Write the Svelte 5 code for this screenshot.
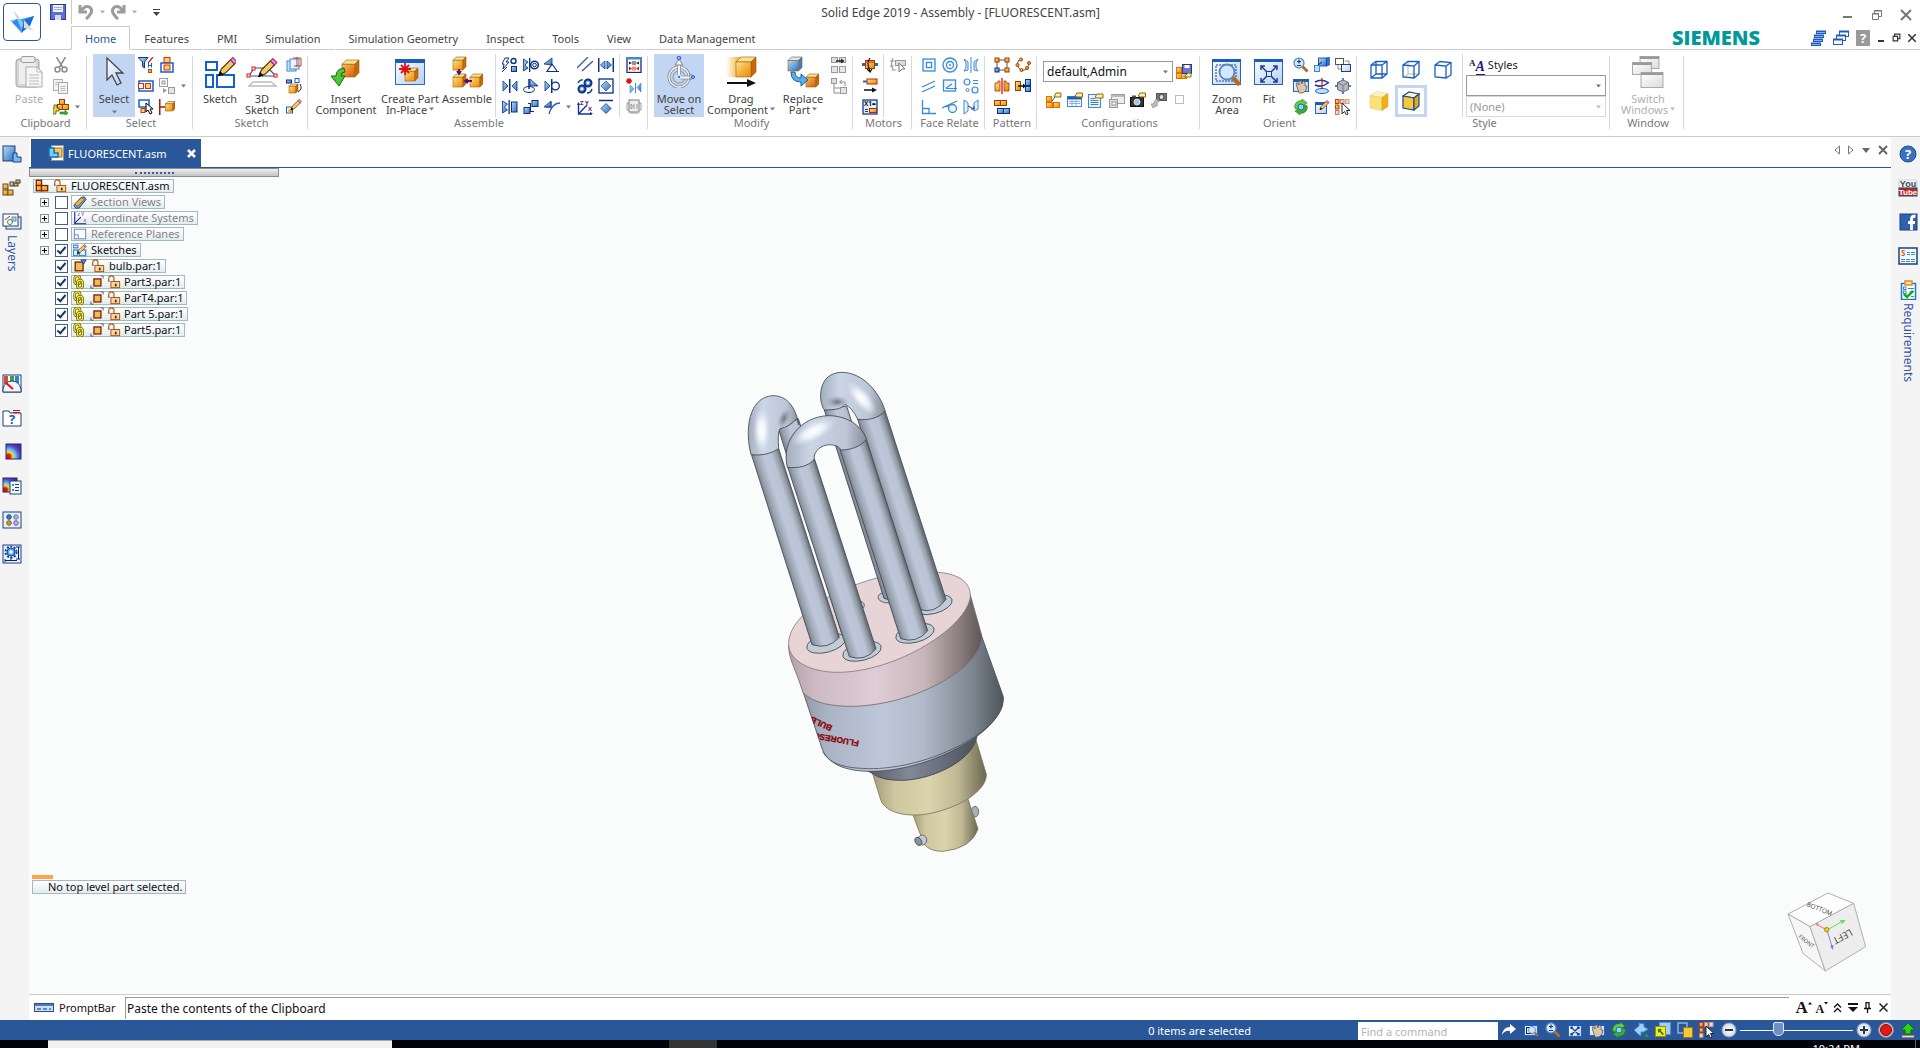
<script>
   const tabs = ["Home", "Features", "PMI", "Simulation", "Simulation Geometry", "Inspect", "Tools", "View", "Data Management"];
   let activeTab = $state("Home");
   let prompt = $state("Paste the contents of the Clipboard");

   // svg helpers
   const r = (x, y, w, h, fill = "none", stroke = "none", sw = 1) =>
      `<rect x="${x}" y="${y}" width="${w}" height="${h}" fill="${fill}" stroke="${stroke}" stroke-width="${sw}"/>`;
   const p = (d, stroke = "none", fill = "none", sw = 1) =>
      `<path d="${d}" fill="${fill}" stroke="${stroke}" stroke-width="${sw}"/>`;
   const c = (x, y, rad, fill = "none", stroke = "none", sw = 1) =>
      `<circle cx="${x}" cy="${y}" r="${rad}" fill="${fill}" stroke="${stroke}" stroke-width="${sw}"/>`;

   const NAVY = "#0a2f86", BLUE = "#1261d1", SKY = "#3a8ad6", RUST = "#a03a00", GRAY = "#9a9a9a", RED = "#e01010";
   const OR = "url(#gOrange)", BL = "url(#gBlue)", GL = "url(#gGlass)", GY = "url(#gGray)";

   const cube = (x, y, s, front = OR, top = "#fbe08a", side = "#c96a08") => {
      const d = s * 0.25;
      return p(`M${x} ${y + d}l${d} ${-d}h${s - d}l${-d} ${d}z`, "#8a5a10", top, 0.6)
         + p(`M${x + s - d} ${y + d}l${d} ${-d}v${s - d}l${-d} ${d}z`, "#8a5a10", side, 0.6)
         + r(x, y + d, s - d, s - d, front, "#a06010", 0.6);
   };
   const pencil = (x, y, s) => `<g transform="translate(${x} ${y}) scale(${s})">`
      + p("M0 16 2 10.500 10 2.500 13.500 6 5.500 14z", "#4a3000", "#f3c868") + p("M0 16 1 13 3 15z", "#000", "#222")
      + p("M10 2.500 12 .5 15.500 4 13.500 6z", "#a0307a", "#f090c8") + `</g>`;
   const lens = (x, y, rad) => p(`M${x + rad * 0.7} ${y + rad * 0.7}l${rad} ${rad}`, "#b86a20", "none", rad * 0.6)
      + c(x, y, rad, "#cfe8ff", "#5a88b8", rad * 0.25);
   const win = (x, y, w, h) => r(x, y, w, h, GL, "#2c62b8") + r(x - 0.5, y - 0.5, w + 1, 3, "#1c5cc0");
   const rotate = p("M2 9.500A6 6 0 0 1 9 1.800V0l5 4-5 3.500V5.500A4 4 0 0 0 5.500 10z", "#1c7a10", "#5cd040", 0.6)
      + p("M14 6.500A6 6 0 0 1 7 14.200V16l-5-4 5-3.500v2A4 4 0 0 0 10.500 6z", "#1c7a10", "#3cb02a", 0.6) + c(8, 8, 3, "#8fd0f8", "#2a68b0");
   const hand = win(0.5, 1.500, 15, 12) + p("M4 9 3 5l2 0 1 2 0-4 2 0 1 3 1-3 2 1 0 4 2 0-1 4-3 3-4 0z", "#6a5a48", "#d8c8b0", 0.8);
   const mate = (right) => p("M1 3v10l5-5z", NAVY, BL, 0.8) + r(7, 1, 1.500, 14, NAVY) + right;

   const icons = {
      cut: p("M3.500 0 9.500 10M12.500 0 6.500 10", "#8c8c8c", "none", 1.500) + c(4.500, 12.500, 2.500, "none", "#8c8c8c", 1.500) + c(11.500, 12.500, 2.500, "none", "#8c8c8c", 1.500),
      copy: r(0.5, 1.500, 9, 11, "#f2f2f2", "#b0b0b0") + r(5.500, 4.500, 9, 11, "#f4f4f4", "#a8a8a8") + p("M7.500 8.500h5M7.500 10.500h5M7.500 12.500h5M2.500 4.500h4M2.500 6.500h2", "#bbb"),
      pasteRel: r(6.500, 0.5, 5, 5, OR, RUST) + r(4.500, 5.500, 5, 5, OR, RUST) + r(9.500, 5.500, 6, 5, OR, RUST) + p("M1 6h3v3h2v3H3v3H0V9h1z", "#333", "#e8d820", 0.7) + p("M7 13h5v-2l3 3-3 3v-2H7z", "#0a700a", "#2eb82e", 0.5),
      filter: p("M0 .5h10L6.500 5v6l-2-1.500V5z", "#0b3d7c", BL) + p("M15 0 10 6", RED, "none", 1.200) + p("M10.500 8.500h3M10.500 6v4.500M13.500 6v4.500", BLUE) + r(10.500, 12.500, 3, 3, "#f5b042", "#c05000"),
      selTop: r(2, 6, 12, 9, "none", BLUE, 1.500) + r(5, 0.5, 6, 5, "#fbd06a", "#d03010") + r(5, 8, 6, 5, "#fbd06a", "#d03010"),
      selMid: r(1, 3, 14, 10, "none", BLUE, 1.500) + r(0.5, 5.500, 5, 5, "#fff", "#d03010") + r(7.500, 5.500, 5, 5, "#fbd06a", "#d03010"),
      selSub: r(0.5, 0.5, 8, 8, "none", GRAY) + r(3, 3, 3, 3, "#e8e8e8", GRAY) + r(9.500, 9.500, 6, 6, "#e4e4e4", GRAY) + p("M4 10v5l4-2.500z", "none", GRAY),
      selBox: r(1, 1, 10, 7, "none", BLUE, 1.500) + r(3, 9.500, 4, 4, "#fbd06a", "#d03010") + p("M8 4v9l2-2 2 4 2-1-2-4h3z", "#000", "#fff"),
      selEdge: r(0, 0, 1.500, 16, "#a01818") + p("M1 8h5", "#a01818", "none", 1.500) + cube(6.500, 2.500, 9.500),
      planes: r(1, 4, 9, 10, "#cfe6fb", SKY) + r(4, 2, 9, 10, "#e8f3fd", SKY) + p("M7 1h8v8H8M11 0v10", "#d04020"),
      reuse: r(0.5, 2, 5, 3, BL, NAVY) + r(9, 0.5, 4, 4, "#fff", BLUE) + cube(3, 6, 9) + p("M12 14q5-3 2-8", "#222"),
      redraw: r(0.5, 8, 6, 6, "#fff", BLUE) + r(2, 9.500, 4, 4, OR) + pencil(5, 0, 0.68),
      flash: p("M3 1h4L4 5h3L1 12l1-5H0z", NAVY, "#fff") + c(11.500, 4, 2.500, "#fff", NAVY, 1.400) + r(9.500, 9.500, 5, 5, BL, NAVY) + p("M0 15 5 10", NAVY),
      mate: mate(p("M15 3v10l-5-5z", NAVY, BL, 0.8)),
      axial: p("M0.500 2v12l4.500-3-3-3 3-3z", NAVY, BL, 0.8) + r(6, 1, 1.300, 14, NAVY) + c(11.500, 8, 3.800, "#fff", NAVY, 1.500) + c(11.500, 8, 1.800, "none", NAVY),
      angle: p("M0 7 8 1v7z", NAVY, BL, 0.8) + p("M8 7 3 14.500h12M8 7l5 7", NAVY, "none", 1.200),
      parallel: p("M0 11 11 0M5 14 16 4", "#3558a8", "none", 1.300),
      parallelAx: p("M0.700 1v14M15.300 1v14", NAVY, "none", 1.500) + p("M2.500 8 7 4v8zM13.500 8 9 4v8z", NAVY, BL, 0.8),
      insert: `<ellipse cx="6" cy="11.500" rx="5.500" ry="3" fill="none" stroke="${NAVY}"/>` + p("M6 1v10", NAVY, "none", 1.500) + p("M7 1 15 8H7z", NAVY, BL, 0.8),
      center: mate(c(11.500, 8, 3.800, "#fff", NAVY, 1.300)),
      gear: c(11, 5, 3.500, BL, NAVY, 2) + c(11, 5, 1.300, "#fff") + c(5, 11, 3.500, BL, NAVY, 2) + c(5, 11, 1.300, "#fff") + p("M1 5q2-4 5-3M15 11q-1 4-5 4", NAVY, "none", 1.300),
      diamondBox: r(1, 1, 14, 14, "#fff", NAVY, 1.300) + p("M8 3 13 8 8 13 3 8z", NAVY, BL, 0.6),
      planar: p("M0.500 2v12l5-3-3-3 3-3z", NAVY, BL, 0.8) + r(6.500, 1, 1.300, 14, NAVY) + r(9.500, 3, 5.500, 10, BL, NAVY),
      match: r(9, 1.500, 6, 6, BL, NAVY) + r(1, 8.500, 6, 6, BL, NAVY) + p("M5 4.500h2.500v8H11", NAVY, "none", 1.200),
      tangent: p("M0 8 7 2v6z", NAVY, BL, 0.8) + p("M5 15Q8 4 16 4M7 3v5H2", "#3558a8", "none", 1.300),
      axes: p("M1.500 4v11H15M2 14.500 10 6", "#123a9c", "none", 1.400) + `<text x="3" y="6" font-size="6" font-family="Open Sans" font-weight="bold" fill="#70107a">Z Y</text><text x="11" y="12" font-size="6" font-family="Open Sans" font-weight="bold" fill="#70107a">X</text>` + p("M0 6 1.500 3 3 6zM13 13l3 1.500-3 1.500z", "none", "#123a9c"),
      diamondTop: p("M1 1.500h14", NAVY, "none", 1.500) + p("M8 4.500 13 9.500 8 14.500 3 9.500z", NAVY, BL, 0.8),
      capture: r(1, 0.500, 14, 15, "#fff", NAVY, 1.300) + r(1, 0, 14, 2.500, SKY) + p("M3 4.500v3l3-1.500zM13 4.500v3l-3-1.500zM7 4v4M9 4v4", "none", "#222") + p("M7 4v4M9 4v4", "#222") + p("M3 9.500v4l3-2zM13 9.500v4l-3-2z", "none", RED) + p("M7 9.500v4M9 9.500v4", RED),
      newRel: p("M3 0v6M0 3h6M1 1l4 4M5 1 1 5", RED, "none", 1.300) + p("M4 7v8l4-4zM15 5v9l-4-4.500z", SKY, BL, 0.6) + p("M9.500 5v10", SKY),
      gray3: r(3, 1, 10, 12, "#eee", GRAY, 1.300) + p("M3 4H1v7h2M13 4h2v7h-2M5 5v5l2-2.500zM8 5v5M11 5v5", GRAY) + p("M4 14h8", GRAY),
      replA: r(0.5, 0.5, 6, 5, "#ddd", GRAY) + r(0.5, 9.500, 6, 6, "#e6e6e6", GRAY) + r(8.500, 9.500, 6, 6, "#e6e6e6", GRAY) + r(8.500, 0.5, 6, 5, "#e6e6e6", GRAY) + p("M5 4h7", "#222", "none", 1.500) + p("M10 1.500 13.500 4 10 6.500z", "none", "#222"),
      replB: r(0.5, 0.5, 5, 5, "#ddd", GRAY) + r(9.500, 9.500, 6, 6, "#e6e6e6", GRAY) + p("M3 6v9h6M3 10h6M14 8V4H9M11 2 8.500 4 11 6", "#8a8a8a"),
      motorA: r(3.500, 3.500, 9, 8, OR, RUST) + p("M0 7.500h3M13 7.500h3", "#3a62b0", "none", 3) + p("M8 1q-4 5 0 13M5 12l3 3 2-3", "#111", "none", 1.200) + p("M3 5h10", "#d02010"),
      motorB: r(5, 1, 10, 5, OR, "#b02808") + r(1, 2.500, 4, 2, "#3a62b0") + p("M2 12h9", "#111", "none", 1.500) + p("M10 9.500 15 12l-5 2.500z", "none", "#111"),
      motorC: r(1, 1, 14, 14, "#e8f0fc", "#123a9c", 1.300) + `<text x="2" y="7" font-size="6.500" font-family="Open Sans" font-weight="bold" fill="#111">X1=</text>` + r(7.500, 9.500, 7, 4, OR, "#b02808") + p("M3 10.500h3M3 12.500h3", "#123a9c"),
      motorG: r(5.500, 3.500, 10, 5, "#ddd", GRAY) + p("M3 1q-3 6 0 12M0 4h5M0 9h4M2 13h4", GRAY, "none", 1.200) + p("M9 6v9l3-3h3z", "#777", "#fff"),
      fConc: r(2, 2, 12, 12, "#f0f7ff", SKY, 1.300) + r(5.500, 5.500, 5, 5, "#fff", SKY, 1.300),
      fRing: c(8, 8, 7, "#f0f7ff", SKY, 1.300) + c(8, 8, 3.500, "#fff", SKY, 1.300) + c(8, 8, 1, SKY),
      fSym: p("M1 2 5 5v8L1 14l2-3V6zM15 2l-4 3v8l4 1-2-3V6z", SKY, "#eaf4ff") + p("M8 0v16", SKY),
      fPar: p("M1 9 14 3M1 14 14 8", SKY, "none", 1.200),
      fAlign: r(1.500, 2, 12, 11, "#f0f7ff", SKY, 1.300) + p("M4 10 10 6M4 10.500h11", SKY, "none", 1.200),
      fEq: c(4, 4, 3, "#eef6ff", SKY, 1.200) + c(12, 12, 3, "#eef6ff", SKY, 1.200) + c(4.500, 12, 1.500, "none", SKY) + p("M10 2.500h5M10 5.500h5", SKY),
      fPerp: p("M1.500 1v13.500H15M2 9.500h6v5", SKY, "none", 1.300),
      fTan: c(10.500, 9.500, 4, "#eef6ff", SKY, 1.300) + p("M0 9 15 2M4 8l3-1", SKY, "none", 1.200),
      fOff: p("M1 1 5 4v8L1 15zM15 1l-4 3v8l4-2z", SKY, "#eaf4ff") + p("M5 7l6 3M8 10h3V7", "#123a9c"),
      pRect: p("M3 3h10v10H3z", "#555") + r(1, 1, 4, 4, OR, RUST) + r(11, 1, 4, 4, OR, RUST) + r(1, 11, 4, 4, BL, NAVY) + r(11, 11, 4, 4, OR, RUST),
      pCurve: p("M4 3Q0 9 6 13q5 2 8-6", "#8a4a10") + c(6, 2.500, 1.500, OR, RUST) + c(2.500, 8, 1.500, OR, RUST) + c(6.500, 13, 1.500, OR, RUST) + c(12, 11, 1.500, OR, RUST) + c(14, 6, 1.500, OR, RUST),
      pMirror: p("M1 5h3V3h2v10H1zM15 5h-3V3h-2v10h5z", RUST, OR, 0.8) + p("M8 0v16", RED, "none", 1.300),
      pDup: r(0.5, 3.500, 5, 9, OR, RUST) + p("M3 8h6", "#111", "none", 1.500) + p("M8 5.500 11 8l-3 2.500z", "none", "#111") + r(10.500, 1.500, 5, 6, BL, NAVY) + r(10.500, 8.500, 5, 5, BL, NAVY),
      pClone: r(0.5, 1.500, 6, 5, OR, RUST) + r(6.500, 1.500, 6, 5, OR, RUST) + r(3.500, 9.500, 6, 5, BL, NAVY) + r(9.500, 9.500, 6, 5, BL, NAVY),
      cfgSave: r(0.5, 3.500, 5, 5, OR, "#e07000") + r(0.5, 9.500, 5, 5, OR, "#e07000") + r(5.500, 9.500, 5, 5, OR, "#e07000") + r(6.500, 0.500, 9, 9, "#6a7ac8", "#2a3484") + r(8.500, 1, 5, 3, "#fff") + p("M9 12l3-3h3v4h-6z", "#8a6a10", "#fdf0a0"),
      cfg1: r(0.5, 4.500, 5, 5, OR, "#e07000") + r(0.5, 10.500, 6, 5, OR, "#e07000") + r(7.500, 10.500, 6, 5, OR, "#e07000") + p("M8 5 10 1h5v4h-5z", "#8a6a10", "#fdf0a0") + p("M6 9 9 5", "#555"),
      cfg2: r(0.5, 4.500, 14, 10, "#fff", SKY) + r(0.5, 4.500, 14, 3, "#1c5cc0") + p("M2 9.500h11M2 11.500h11M5 8v6M9 8v6", "#8ab0e0") + p("M8 4 10 1h5.500v4H10z", "#8a6a10", "#fdf0a0"),
      cfg3: r(0.5, 2.500, 12, 13, "#e8f2fd", SKY) + p("M2.500 6.500h5M2.500 8.500h8M2.500 10.500h8M2.500 12.500h8", "#4a80c8") + p("M7 5 9 2h6v4H9z", "#8a6a10", "#fdf0a0"),
      cfg4: r(2.500, 2.500, 13, 9, "#eee", GRAY) + r(0.5, 7.500, 8, 8, "#ddd", GRAY) + r(2, 3, 13, 2, "#bbb") + r(3, 10, 4, 3, "#fff", GRAY),
      cfg5: r(0.5, 5.500, 13, 9, "#333", "#111") + c(7, 10, 3, "#9cc8f0", "#ddd") + r(2, 3.500, 4, 2, "#555") + p("M8 4 10 1h5.500v4H10z", "#8a6a10", "#fdf0a0"),
      cfg6: r(5.500, 1.500, 10, 7, "#777", "#555") + c(10.500, 5, 2.500, "#ddd", "#444") + p("M5 7 2 12H0l2 4 5-3H5l3-4z", GRAY, "#bbb", 0.8),
      cfg7: `<rect x="3.500" y="3.500" width="8" height="8" fill="none" stroke="#777" stroke-dasharray="1 1"/>`,
      zoom: lens(6, 6, 5) + p("M4 4.500h4M6 2.500v4M4 8.500h4", "#1a3a70", "none", 1.200),
      pan: hand,
      rotate,
      prevView: r(4.500, 1, 8, 8, BL, "#1c5cc0") + p("M12.500 1 15.500 0v8l-3 1z", NAVY, "#2a70c8", 0.5) + r(0.5, 8.500, 5, 6, "#bfe0fa", SKY) + p("M4 8 8 5", "#111"),
      spin: p("M1 4Q8 0 15 5M1 7q7 3 13-2", "#223a90", "none", 1.500) + p("M8 0v12", RED, "none", 1.200) + `<ellipse cx="8" cy="13" rx="6.500" ry="2.500" fill="#bfe0fa" stroke="#1c5cc0"/>`,
      newWin: win(1.500, 3.500, 11, 11) + pencil(6, 1, 0.6),
      views: r(0.5, 1.500, 8, 6, "#fff", "#555") + r(6.500, 7.500, 9, 7, GL, "#223a90") + p("M3 8v4h3M10 4h4v3", "#888"),
      cubeNav: p("M8 2 13.500 4.500v7L8 14 2.500 11.500v-7z", "#666", "#b4b8c0") + p("M8 7.500V14M8 7.500 2.500 4.500M8 7.500l5.500-3", "#777") + p("M8 0v2M8 14v2M0 8h2.500M13.500 8H16", SKY, "none", 2),
      picks: r(0.5, 0.5, 3.500, 4, OR, "#c04010") + r(5.500, 0.5, 3.500, 4, "#f6c8b0", "#d08060") + r(10.500, 0.500, 3.500, 4, "#f6d8c8", "#d0a090") + r(0.5, 6, 3.500, 4, OR, "#c04010") + r(0.5, 11.500, 3.500, 4, "#f6d8c8", "#c08060") + p("M7 4v11l2.500-2.500 2 3.500 1.500-1-1.500-3.500H15z", "#223", "#fff"),
      arrowR: p("M1 13Q2 5 9 5V2l6 5-6 5V9Q4 8 1 13z", "none", "#fff"),
      zoomWin: win(1.500, 1.500, 13, 12) + r(3.500, 5.500, 6, 6, "none", "#223") + lens(9, 8, 3.500),
      fitWin: win(1.500, 1.500, 13, 13) + p("M4 5l8 8M12 5l-8 8M4 7V5h2M10 5h2v2M4 11v2h2M10 13h2v-2", "#223a90", "none", 1.200),
      puzzle: p("M1 8 6 4V1l5 1v3l4 2-4 3-3 0v4L5 12z", "#3a8ad6", "#9fd0f8") + p("M11 15l2-4 3 4z", "none", "#22a022"),
      yellowWin: r(4.500, 0.5, 11, 12, "#9fd0f8", "#5a90d0") + r(0.5, 4.500, 10, 10, "#f4e820", "#a09000") + p("M3 7h4L5.500 8.500 9 12l-1.500 1L4.500 9.500 3 11z", "none", "#108010"),
      stack: r(1, 1, 9, 10, "#2a579a", "#9fc8f0", 1.200) + r(6.500, 5.500, 9, 10, "#f8c83a", "#a07808"),
      minus: c(8, 8, 7, "url(#gKnob)", "#8aa0c0") + p("M4 8h8", "#333", "none", 2),
      plus: c(8, 8, 7, "url(#gKnob)", "#8aa0c0") + p("M4 8h8M8 4v8", "#333", "none", 2),
      stop: c(8, 8, 7.500, "#c8c8c8", "#888") + c(8, 8, 5.500, "#e01818", "#900"),
      up: p("M8 1 15 8h-4v4H5V8H1z", "#0a700a", "#2ed01a") + r(2, 13.500, 12, 2, "#f0d8c8", "#b07050", 0.5),
      undo: p("M2 1v7h7M3 7Q7 1 11.500 3Q17 7 8 15", "#9c9c9c", "none", 3),
      redo: p("M14 1v7H7M13 7Q9 1 4.500 3Q-1 7 8 15", "#9c9c9c", "none", 3),
      save: r(0.5, 0.5, 15, 15, "#5b72cc", "#2a3a96") + r(3, 1, 10, 7, "#eef2fa") + r(5, 11, 6, 5, "#d8dcec") + p("M4 3.500h8M4 5.500h8", "#a8b0c8"),
      cascadeA: r(6.500, 1.500, 9, 2, "#fff", "#1c5cc0") + r(4.500, 5.500, 9, 2, "#fff", "#1c5cc0") + r(3.500, 9.500, 9, 2, "#fff", "#1c5cc0") + r(1.500, 13.500, 9, 2, "#fff", "#1c5cc0") + p("M6 1.500h10M4 5.500h10M3 9.500h10M1 13.500h10", "#1c5cc0", "none", 2),
      cascadeB: r(6.500, 1.500, 9, 5, "#fff", "#1c5cc0") + r(3.500, 5.500, 9, 5, "#fff", "#1c5cc0") + r(0.500, 9.500, 9, 5, "#fff", "#1c5cc0") + p("M6 1.500h10M3 5.500h10M0 9.500h10", "#1c5cc0", "none", 2),
      doc: r(3.500, 0.500, 12, 15, "#fff", "#8a94a0") + r(6, 3, 8, 9, "#f8c84a", "#a07818") + p("M1 3h5v5h4v4H1z", "#1a6fc0", "#7ad0f8", 1.500),
      asm: r(1.500, 1.500, 6, 6, OR, "#7a2000", 1.500) + r(1.500, 7.500, 6, 6, OR, "#7a2000", 1.500) + r(7.500, 7.500, 7, 6, OR, "#7a2000", 1.500),
      lock: r(4.500, 7.500, 10, 7, "#f8d890", "#a04010") + p("M2 7V4q0-3 3-3t3 3v3M1 7h2", "#a05818", "none", 1.300) + r(9, 10, 2, 3, "#333"),
      section: p("M1 12 9 3l4-1 2 3-8 10-4 0z", "#1c3c78", "#6aa0e0") + p("M2 10 10 3l3 2-8 8z", "#8a5010", "#f0b848"),
      coords: p("M2 1v13.500h13M2 14 9 7", "#102080", "none", 1.200) + `<text x="5" y="6" font-size="6" font-family="Open Sans" fill="#70107a">z Y</text><text x="12" y="12" font-size="6" font-family="Open Sans" fill="#70107a">x</text>`,
      plane: r(1.500, 2.500, 13, 11, "#f8fbff", "#5a78b8") + p("M2 9h4v4", "#5a78b8"),
      sketches: r(0.500, 2.500, 5, 3, "none", SKY, 1.500) + r(0.500, 8, 5, 6.500, "none", SKY, 1.500) + r(7.500, 8, 7, 6.500, "none", SKY, 1.500) + pencil(5, 1, 0.68),
      part: r(2.500, 3.500, 9, 10, "#f4bc50", "#7a2000", 1.500) + p("M9 1h6l-3 5z", NAVY, "#6a90e0"),
      partB: r(4.500, 4.500, 8, 8, "#f4bc50", "#7a2000", 1.500) + p("M12 1h3v3M1 12v3h3", "#555"),
      link: `<rect x="2" y="1" width="6" height="9" rx="3" fill="none" stroke="#5a5000" stroke-width="3"/><rect x="2" y="1" width="6" height="9" rx="3" fill="none" stroke="#f0e030" stroke-width="1.500"/><rect x="5" y="6" width="6" height="9" rx="3" fill="none" stroke="#5a5000" stroke-width="3"/><rect x="5" y="6" width="6" height="9" rx="3" fill="none" stroke="#f0e030" stroke-width="1.500"/>`,
      // sidebar, 20 x 20
      sPath: r(1, 2, 12, 15, BL, "#1c4078") + p("M11 9h4v4h4v5h-8z", "#1c4078", "#7ab8f0"),
      sLib: r(1, 6, 5, 5, OR, "#6a4a20") + r(1, 12, 5, 5, OR, "#6a4a20") + r(6, 12, 5, 5, OR, "#6a4a20") + r(8, 4, 4, 4, OR, "#345") + r(12, 5, 4, 3, OR, "#345") + r(14, 2, 4, 3, OR, "#345"),
      sLay: r(4, 5, 15, 12, "#e0eaf6", "#1c4078") + r(1, 2, 15, 12, "#fff", "#1c4078") + p("M3 8 8 4", RED) + c(8, 10, 2.500, "none", "#28a028") + r(10, 5, 4, 4, "#bcd", "#68a"),
      sSens: r(1, 1, 18, 17, "#fff", "#1c4078") + r(2, 2, 4, 8, "#d05030") + r(8, 2, 4, 8, "#38a050") + r(13, 2, 4, 8, "#3a80d0") + p("M1 15Q3 7 10 7t9 8v3H1z", "#1c4078", "#f2f6fa") + p("M11 15 4 9", RED, "none", 2),
      sHelp: p("M1 3h6l1 2h11v13H1z", "#1c4078", "#fff") + p("M11 2.500h7M11 4.500h7", RED) + `<text x="7" y="16" font-size="13" font-family="Open Sans" font-weight="bold" fill="#1c5cb0">?</text>`,
      sSim: `<rect x="4" y="2" width="15" height="15" fill="url(#gHeat)" stroke="#1c3068"/>`,
      sSimB: `<rect x="1" y="2" width="14" height="14" fill="url(#gHeat)" stroke="#1c3068"/>` + r(8, 5, 11, 13, "#f4f8ff", "#1c4078") + p("M13 8.500h4M13 11.500h4M13 14.500h4", "#1c4078") + r(10, 8, 2, 2, SKY) + r(10, 13, 2, 2, SKY),
      sDots: r(1, 2, 18, 16, "#e8f0f8", "#1c4078") + c(7, 7, 2.300, "#3a78c0", "#24508a") + c(14, 7, 2.300, "#a0b8c8", "#68808e") + c(7, 13, 2.300, "#d89820", "#8a5c08") + c(14, 13, 2.300, "#c0b0f0", "#6a50c0"),
      sGear: r(1, 1, 18, 18, "#e8f4ff", "#1c3c9c") + `<circle cx="9" cy="8" r="5.500" fill="none" stroke="#12409a" stroke-width="2" stroke-dasharray="2 1.500"/>` + c(9, 8, 4, "#4ab0f0", "#12409a") + c(9, 8, 1.800, "#fff") + p("M16.500 3v12M14 3h4M14 15h4M3 16.500h12M3 15v3M9 13v4", "#102060"),
      sQ: c(10, 10, 8, "#3a70c0", "#1c4890") + `<text x="10" y="15" text-anchor="middle" font-size="13" font-family="Open Sans" font-weight="bold" fill="#fff">?</text>`,
      sTube: r(1, 2, 18, 8, "#f2f6fa", "#c8d4e4") + r(1, 10, 18, 8, "#c82818", "#1c4078") + `<text x="10" y="9" text-anchor="middle" font-size="9" font-family="Liberation Sans" font-weight="bold" fill="#444">You</text><text x="10" y="17" text-anchor="middle" font-size="8" font-family="Liberation Sans" font-weight="bold" fill="#fff">Tube</text>`,
      sFb: r(2, 2, 17, 16, "#2f62ae", "#1c4078") + p("M13.500 18v-7M10 10.500h7M13.500 12V7q0-3 4-3", "#fff", "none", 2.800),
      sCard: r(1, 2, 18, 16, "#f6fbff", "#1c4078", 1.500) + `<text x="3" y="10" font-size="8" font-family="Open Sans" font-weight="bold" fill="#d06010">S</text>` + p("M9 6.500h3M13 6.500h4M9 8.500h3M13 8.500h4M3 13.500h4M8 13.500h4M13 13.500h4M3 15.500h4M8 15.500h4M13 15.500h4", SKY),
      sReq: r(3.500, 3.500, 14, 16, "#fff", "#1c78c8", 1.500) + r(7, 1, 7, 4, "#f6e0b8", "#d89018", 1.500) + r(5.500, 7, 2.500, 2.500, "none", SKY) + r(5.500, 11, 2.500, 2.500, "none", SKY) + p("M10 8.500h6M12 11.500h4M13 16.500h3", SKY) + p("M6 14l3 3 6-6", "#10b010", "none", 2.500),
      // large, 32 x 32
      paste: `<rect x="3" y="3" width="23" height="28" rx="3" fill="#d6d6d6" stroke="#a0a0a0"/>` + r(6, 6, 17, 22, "#ededed") + `<rect x="8" y="0.500" width="14" height="6" rx="2" fill="#eee" stroke="#9c9c9c"/>` + p("M13 11h11l5 5v15H13z", "#aaa", "#f6f6f6") + p("M24 11v5h5M16 19h10M16 22h10M16 25h10M16 28h10", "#bbb"),
      select: p("M9 2v22l5-5 5 10 4-2-5-10h7z", "#444", GL, 1.300),
      sketch: r(2, 6, 11, 8, "none", BLUE, 2) + r(2, 19, 7, 12, "none", BLUE, 2) + r(13, 19, 17, 12, "none", BLUE, 2) + pencil(15, 1, 1.150),
      sketch3d: p("M3 20 8 12h14l8 8z", "#3848a8", "none", 1.200) + p("M3 30l4-4h18l5 4z", "#bbb", "none", 1.300) + r(1, 18, 3, 3, "#fff", RED) + r(6, 11, 3, 3, "#fff", RED) + r(28, 18, 3, 3, "#fff", RED) + pencil(13, 2, 1.150),
      insertC: cube(12, 4, 17, "url(#gOrange2)") + p("M14 12Q6 13 6 20H1l8 10 6-10h-4q0-4 4-4z", "#156a10", "#4cc83a"),
      create: r(1.500, 3.500, 29, 25, GL, "#2c68c8") + r(1, 3, 30, 4, "#1c5cc0") + cube(11, 12, 13) + p("M11 7v12M5 13h12M7 9l8 8M15 9l-8 8", RED, "none", 1.800),
      assemble: cube(2, 1, 13) + cube(2, 18, 13) + cube(19, 18, 13) + p("M8 13v5M6 15l2 3 2-3M21 25h-6M17 23l-3 2 3 2", "#5a0a70", "none", 1.800),
      move: c(16, 21, 10, "none", "#8a9098", 3) + c(16, 21, 10, "none", "#eef2f6", 1.300) + c(16, 21, 6, "none", "#a0a6ae", 1.300) + r(14.500, 6, 3, 15, "#f2f4f6", "#888", 0.7) + r(16, 20, 13, 3, "#f2f4f6", "#888", 0.7) + p("M12 9 16 3l4 6zM27 18l4 3-4 3z", "#888", "#f2f4f6") + c(16, 2, 1.800, "#9ab8ff", "#2858e0") + c(16, 21, 2, "#4878f0", "#fff") + c(30, 21, 1.500, "#9ab8ff", "#2858e0"),
      drag: `<rect x="1" y="1" width="15" height="20" fill="url(#gTrail)"/>` + cube(11, 1, 20) + p("M2 27h22", "#111", "none", 2) + p("M22 23l9 4-9 4z", "none", "#111"),
      replace: cube(1, 1, 14, BL, "#cfe8fc", "#3a80c8") + cube(19, 18, 13, "url(#gOrange2)") + p("M4 16H8Q8 22 14 22V18l7 6-7 6V26Q4 26 4 16z", "#1c5c98", "#5ab0e8"),
      zoomArea: win(1.500, 3.500, 28, 25) + `<rect x="5" y="9" width="20" height="16" fill="none" stroke="#223a90" stroke-dasharray="2 1"/>` + lens(16, 16, 7.500),
      fit: win(1.500, 3.500, 28, 25) + p("M8 10l6 6M24 10l-6 6M8 26l6-6M24 26l-6-6M8 14v-4h4M20 10h4v4M8 22v4h4M20 26h4v-4", "#1c3c9c", "none", 1.500) + r(13.500, 15.500, 5, 5, "none", "#1c3c9c"),
      windows: [[8, 0.500, 19, 12], [0.500, 6.500, 19, 12], [9, 16.500, 22, 15]].map(([x, y, w, h]) => r(x, y, w, h, GY, "#aaa") + r(x, y, w, 2.500, "#999")).join(""),
      // shaded cubes, 20 x 20
      wire: p("M2 5l5-3.500h11v12.500L13 18H2zM2 5h11v13M13 5l5-3.500M7 1.500V14h11M7 14 2 18", "#1a5fc0", "none", 1.300),
      wireGray: p("M7 1.500V14h11M7 14 2 18", "#b8b8b8") + p("M2 5l5-3.500h11v12.500L13 18 2 17zM2 5l11 1v12M13 6l5-4.500", "#1a5fc0", "none", 1.300),
      wireHid: p("M2 5l5-3.500 11 1v12.500L13 18 2 17zM2 5l11 1v12M13 6l5-3.500", "#1a5fc0", "none", 1.300),
      shade: p("M1 4.500l7-4 11 2-6 4z", "#e8c85a", "#fdf3c8", 0.5) + p("M1 4.500l12 2v13L1 17z", "#e8c85a", "#fae27a", 0.5) + p("M13 6.500l6-4v13l-6 4z", "#d89a10", "#eeb020", 0.5),
      shadeEdge: p("M2 5l6-4 10 2-5 4z", "#1a4f9a", "#fdf3c8", 1.200) + p("M2 5l11 2v12L2 17z", "#1a4f9a", "#f6c83a", 1.200) + p("M13 7l5-4v12l-5 4z", "#1a4f9a", "#e8a818", 1.200)
   };

   const groups = [
      { name: "Clipboard", parts: [
         { big: "paste", lines: ["Paste"], size: "sm", off: true },
         { cols: [["cut", "copy", "pasteRel"]] }, { arrow: 3 }
      ] },
      { name: "Select", parts: [
         { big: "select", lines: ["Select"], size: "sm", on: true, drop: true },
         { cols: [["filter", "selMid", "selBox"], ["selTop", "selSub", "selEdge"]] }, { arrow: 2 }
      ] },
      { name: "Sketch", parts: [
         { big: "sketch", lines: ["Sketch"], size: "sm" },
         { big: "sketch3d", lines: ["3D", "Sketch"], size: "sm" },
         { cols: [["planes", "reuse", "redraw"]] }
      ] },
      { name: "Assemble", parts: [
         { big: "insertC", lines: ["Insert", "Component"], size: "lg" },
         { big: "create", lines: ["Create Part", "In-Place"], size: "lg", drop: true },
         { big: "assemble", lines: ["Assemble"], size: "md" },
         { sep: true },
         { cols: [["flash", "mate", "planar"], ["axial", "insert", "match"], ["angle", "center", "tangent"]] }, { arrow: 3 },
         { cols: [["parallel", "gear", "axes"], ["parallelAx", "diamondBox", "diamondTop"]] },
         { sep: true },
         { cols: [["capture", "newRel", "gray3"]] }
      ] },
      { name: "Modify", parts: [
         { big: "move", lines: ["Move on", "Select"], size: "md", on: true },
         { big: "drag", lines: ["Drag", "Component"], size: "xl", drop: true },
         { big: "replace", lines: ["Replace", "Part"], size: "md", drop: true },
         { cols: [["replA", "replB"]] }
      ] },
      { name: "Motors", parts: [
         { cols: [["motorA", "motorB", "motorC"]] }, { sep: true }, { cols: [["motorG"]] }
      ] },
      { name: "Face Relate", parts: [
         { cols: [["fConc", "fPar", "fPerp"], ["fRing", "fAlign", "fTan"], ["fSym", "fEq", "fOff"]] }
      ] },
      { name: "Pattern", parts: [
         { cols: [["pRect", "pMirror", "pClone"], ["pCurve", "pDup"]] }
      ] },
      { name: "Configurations", parts: [{ config: true }] },
      { name: "Orient", parts: [
         { big: "zoomArea", lines: ["Zoom", "Area"], size: "sm" },
         { big: "fit", lines: ["Fit"], size: "sm" },
         { cols: [["zoom", "pan", "rotate"], ["prevView", "spin", "newWin"], ["views", "cubeNav", "picks"]] }
      ] },
      { name: "Style", parts: [{ styles: true }] },
      { name: "Window", parts: [
         { big: "windows", lines: ["Switch", "Windows"], size: "lg", off: true, drop: true }
      ] }
   ];

   let tree = $state([
      { label: "Section Views", icons: ["section"], open: true, dim: true, on: false },
      { label: "Coordinate Systems", icons: ["coords"], open: true, dim: true, on: false },
      { label: "Reference Planes", icons: ["plane"], open: true, dim: true, on: false },
      { label: "Sketches", icons: ["sketches"], open: true, on: true },
      { label: "bulb.par:1", icons: ["part", "lock"], on: true },
      { label: "Part3.par:1", icons: ["link", "partB", "lock"], on: true },
      { label: "ParT4.par:1", icons: ["link", "partB", "lock"], on: true },
      { label: "Part 5.par:1", icons: ["link", "partB", "lock"], on: true },
      { label: "Part5.par:1", icons: ["link", "partB", "lock"], on: true }
   ]);

   const statusIcons = ["arrowR", "zoomWin", "zoom", "fitWin", "pan", "rotate", "puzzle", "yellowWin", "stack", "picks", "minus"];

   // lamp tubes: top left x/y, top right x/y, bottom left x/y, bottom right x/y
   const backTubes = [
      [145, 235, 205, 206, 335, 850, 392, 780],
      [283, 180, 350, 168, 462, 745, 530, 735],
      [383, 208, 465, 182, 566, 778, 648, 748]
   ];
   const frontTubes = [
      [65, 316, 146, 296, 246, 884, 328, 862],
      [173, 351, 254, 328, 358, 920, 438, 896],
      [330, 299, 409, 268, 512, 866, 593, 842]
   ];
   const feet = [[608, 764], [288, 880], [396, 904], [555, 850]];
   const body = (t) => `M${t[0]} ${t[1]}L${t[4]} ${t[5]}Q${(t[4] + t[6]) / 2 + 8} ${Math.max(t[5], t[7]) + 16} ${t[6]} ${t[7]}L${t[2]} ${t[3]}Z`;
</script>

{#snippet icon(name, size = 16, box = size)}
   <svg width={size} height={size} viewBox="0 0 {box} {box}" aria-hidden="true">{@html icons[name]}</svg>
{/snippet}

{#snippet caret()}
   <svg class="caret" width="7" height="4" viewBox="0 0 7 4" aria-hidden="true"><path d="M0 0h7L3.500 4z" fill="currentColor" /></svg>
{/snippet}

{#snippet tube(t, id)}
   <linearGradient {id} gradientUnits="userSpaceOnUse" x1={t[0]} y1={t[1]} x2={t[0] + 78} y2={t[1] - 25}>
      <stop offset="0" stop-color="#7e8592" /><stop offset="0.15" stop-color="#9ca5b2" />
      <stop offset="0.4" stop-color="#bec7da" /><stop offset="0.7" stop-color="#bac3d4" />
      <stop offset="0.9" stop-color="#929aa6" /><stop offset="1" stop-color="#6a717a" />
   </linearGradient>
   <path d={body(t)} fill="url(#{id})" stroke="#40454c" stroke-width="2.500" />
{/snippet}

<svg class="defs" width="0" height="0" aria-hidden="true">
   <defs>
      <linearGradient id="gOrange" x2="1" y2="1"><stop offset="0" stop-color="#fde49a" /><stop offset="0.5" stop-color="#f6b23a" /><stop offset="1" stop-color="#e88a08" /></linearGradient>
      <linearGradient id="gOrange2" x2="1" y2="1"><stop offset="0" stop-color="#fdc060" /><stop offset="1" stop-color="#d05a00" /></linearGradient>
      <linearGradient id="gBlue" x2="1" y2="1"><stop offset="0" stop-color="#b8dcf8" /><stop offset="1" stop-color="#2a70c0" /></linearGradient>
      <linearGradient id="gGlass" x2="1" y2="1"><stop offset="0" stop-color="#fff" /><stop offset="1" stop-color="#b4d0f4" /></linearGradient>
      <linearGradient id="gGray" x2="1" y2="1"><stop offset="0" stop-color="#fff" /><stop offset="1" stop-color="#dcdcdc" /></linearGradient>
      <linearGradient id="gTrail"><stop offset="0" stop-color="#f8b830" stop-opacity="0" /><stop offset="1" stop-color="#f0a020" /></linearGradient>
      <radialGradient id="gKnob"><stop offset="0" stop-color="#fff" /><stop offset="1" stop-color="#d0dcec" /></radialGradient>
      <radialGradient id="gHeat" cx="0.15" cy="0.85" r="0.95"><stop offset="0.15" stop-color="#e01010" /><stop offset="0.32" stop-color="#f8d820" /><stop offset="0.5" stop-color="#70c8f0" /><stop offset="0.75" stop-color="#5058d0" /><stop offset="1" stop-color="#6020a0" /></radialGradient>
   </defs>
</svg>

<div class="app">
   <header>
      <button class="logo" aria-label="Application menu">
         <svg width="36" height="36" viewBox="0 0 36 36" aria-hidden="true">
            <path d="M9 6 16 14 14 17z" fill="#cfd6dc" />
            <path d="M13 16 30 12 24 23z" fill="#3aa0f0" />
            <path d="M6 16 16 15 22 22 17 29z" fill="#8cc8f8" />
            <path d="M17 29 20 16 30 12 26 22z" fill="#1a6cd8" />
            <path d="M13 15 19 29 8 18z" fill="#2a8cec" />
            <path d="M20 16 26 23 30 27 20 24z" fill="#d4dbe2" />
         </svg>
      </button>
      <div class="head-main">
         <div class="title-row">
            <div class="qat">
               <button aria-label="Save">{@render icon("save")}</button>
               <span class="qat-line"></span>
               <button aria-label="Undo">{@render icon("undo")}</button>
               <button class="drop" aria-label="Undo list">{@render caret()}</button>
               <button aria-label="Redo">{@render icon("redo")}</button>
               <button class="drop" aria-label="Redo list">{@render caret()}</button>
               <button class="custom" aria-label="Customize"><svg width="7" height="7" viewBox="0 0 7 7"><path d="M0 .5h7" stroke="#444" /><path d="M0 3h7L3.500 7z" fill="#444" /></svg></button>
            </div>
            <div class="title">Solid Edge 2019 - Assembly - [FLUORESCENT.asm]</div>
            <div class="win-ctl">
               <button aria-label="Minimize"><svg width="12" height="12" viewBox="0 0 12 12"><path d="M1 8h9" stroke="#777" stroke-width="2" /></svg></button>
               <button aria-label="Restore"><svg width="12" height="12" viewBox="0 0 12 12" fill="none" stroke="#777"><path d="M3.500 4V1.500h7v6H8M3.500 2h7" /><path d="M1.500 4.500h6v6h-6zM1.500 5h6" /></svg></button>
               <button aria-label="Close"><svg width="12" height="12" viewBox="0 0 12 12"><path d="M1 1l10 10M11 1 1 11" stroke="#777" stroke-width="2" /></svg></button>
            </div>
         </div>
         <div class="tab-row">
            <nav>
               {#each tabs as tab}
                  <button class="tab" class:active={tab === activeTab} onclick={() => (activeTab = tab)}>{tab}</button>
               {/each}
            </nav>
            <div class="siemens">SIEMENS</div>
            <div class="doc-ctl">
               <button aria-label="Tile">{@render icon("cascadeA")}</button>
               <button aria-label="Cascade">{@render icon("cascadeB")}</button>
               <button class="help" aria-label="Help">?</button>
               <button aria-label="Minimize document"><svg width="8" height="8" viewBox="0 0 8 8"><path d="M1 7h6" stroke="#333" stroke-width="2" /></svg></button>
               <button aria-label="Restore document"><svg width="9" height="9" viewBox="0 0 12 12" fill="none" stroke="#333" stroke-width="1.500"><path d="M3.500 4V1.500h7v6H8" /><path d="M1.500 4.500h6v6h-6z" /></svg></button>
               <button aria-label="Close document"><svg width="8" height="8" viewBox="0 0 8 8"><path d="M0 0l8 8M8 0 0 8" stroke="#333" stroke-width="1.500" /></svg></button>
            </div>
         </div>
      </div>
   </header>

   <section class="ribbon">
      {#each groups as group}
         <div class="group">
            <div class="parts">
               {#each group.parts as part}
                  {#if part.big}
                     <button class="big {part.size}" class:on={part.on} class:off={part.off}>
                        {@render icon(part.big, 32)}
                        <span class="lines">
                           {#each part.lines as line, i}
                              <span>{line}{#if part.drop && i === 1}{@render caret()}{/if}</span>
                           {/each}
                           {#if part.drop && part.lines.length === 1}<span class="below">{@render caret()}</span>{/if}
                        </span>
                     </button>
                  {:else if part.cols}
                     {#each part.cols as col}
                        <div class="col">
                           {#each col as name}
                              <button aria-label={name}>{@render icon(name)}</button>
                           {/each}
                        </div>
                     {/each}
                  {:else if part.arrow}
                     <div class="arrow-col" class:last={part.arrow === 3}><button aria-label="More">{@render caret()}</button></div>
                  {:else if part.sep}
                     <span class="sep"></span>
                  {:else if part.config}
                     <div class="config">
                        <div class="config-row">
                           <span class="combo">
                              <select aria-label="Configuration"><option>default,Admin</option></select>
                              {@render caret()}
                           </span>
                           <button aria-label="Save configuration">{@render icon("cfgSave")}</button>
                        </div>
                        <div class="config-row">
                           {#each [1, 2, 3, 4, 5, 6, 7] as n}
                              <button aria-label="Display configuration {n}">{@render icon("cfg" + n)}</button>
                           {/each}
                        </div>
                     </div>
                  {:else if part.styles}
                     <div class="cubes">
                        {#each ["wire", "wireGray", "wireHid", "shade", "shadeEdge"] as name}
                           <button aria-label={name} class:sel={name === "shadeEdge"}>{@render icon(name, 20)}</button>
                        {/each}
                     </div>
                     <span class="sep"></span>
                     <div class="styles">
                        <button><span class="aa"><small>A</small><i>A</i></span>Styles</button>
                        <span class="combo"><select aria-label="Style"><option></option></select>{@render caret()}</span>
                        <span class="combo off"><select aria-label="Face style" disabled><option>(None)</option></select>{@render caret()}</span>
                     </div>
                  {/if}
               {/each}
            </div>
            <div class="group-name">{group.name}</div>
         </div>
      {/each}
   </section>

   <div class="work">
      <aside class="left">
         <button aria-label="PathFinder">{@render icon("sPath", 20)}</button>
         <button aria-label="Parts library">{@render icon("sLib", 20)}</button>
         <button aria-label="Layers">{@render icon("sLay", 20)}</button>
         <span class="vtext">Layers</span>
         {#each ["sSens", "sHelp", "sSim", "sSimB", "sDots", "sGear"] as name}
            <button aria-label={name}>{@render icon(name, 20)}</button>
         {/each}
      </aside>

      <main>
         <div class="doc-tabs">
            <div class="doc-tab">
               {@render icon("doc")}
               <span>FLUORESCENT.asm</span>
               <button aria-label="Close tab"><svg width="9" height="9" viewBox="0 0 9 9"><path d="M1 1l7 7M8 1 1 8" stroke="#fff" stroke-width="2.500" /></svg></button>
            </div>
            <div class="doc-nav">
               <button aria-label="Previous"><svg width="6" height="10" viewBox="0 0 6 10"><path d="M5.500 1v8L1 5z" fill="none" stroke="#777" /></svg></button>
               <button aria-label="Next"><svg width="6" height="10" viewBox="0 0 6 10"><path d="M.5 1v8L5 5z" fill="none" stroke="#777" /></svg></button>
               <button aria-label="Documents"><svg width="8" height="5" viewBox="0 0 8 5"><path d="M0 0h8L4 5z" fill="#666" /></svg></button>
               <button aria-label="Close"><svg width="10" height="10" viewBox="0 0 10 10"><path d="M1 1l8 8M9 1 1 9" stroke="#666" stroke-width="2" /></svg></button>
            </div>
         </div>

         <div class="viewport">
            <div class="grip"><span></span></div>
            <div class="tree">
               <div class="node root">{@render icon("asm", 14, 16)}{@render icon("lock", 14, 16)}<span>FLUORESCENT.asm</span></div>
               {#each tree as row}
                  <div class="row">
                     <span class="exp">
                        {#if row.open}
                           <button aria-label="Expand {row.label}"><svg width="9" height="9" viewBox="0 0 9 9"><rect x=".5" y=".5" width="8" height="8" fill="#f4f7f8" stroke="#8a9498" /><path d="M2 4.500h5M4.500 2v5" stroke="#000" /></svg></button>
                        {/if}
                     </span>
                     <label>
                        <input type="checkbox" bind:checked={row.on} />
                        <span class="node" class:dim={row.dim} class:tight={row.icons.length === 3}>
                           {#each row.icons as name}{@render icon(name, 14, 16)}{/each}
                           <span>{row.label}</span>
                        </span>
                     </label>
                  </div>
               {/each}
            </div>

            <svg class="lamp" width="300" height="520" viewBox="0 0 900 1560" role="img" aria-label="Fluorescent lamp model">
               <defs>
                  <linearGradient id="steel"><stop offset="0" stop-color="#8f98a6" /><stop offset="0.12" stop-color="#aab4c4" /><stop offset="0.4" stop-color="#bdc7d9" /><stop offset="0.6" stop-color="#b0bac8" /><stop offset="0.85" stop-color="#7c848e" /><stop offset="1" stop-color="#4e545a" /></linearGradient>
                  <linearGradient id="pink"><stop offset="0" stop-color="#b3a2a8" /><stop offset="0.15" stop-color="#cdbcc3" /><stop offset="0.45" stop-color="#dfccd5" /><stop offset="0.7" stop-color="#c7b7bb" /><stop offset="0.9" stop-color="#857879" /><stop offset="1" stop-color="#5f5657" /></linearGradient>
                  <linearGradient id="brass"><stop offset="0" stop-color="#a39c7c" /><stop offset="0.2" stop-color="#cfc79f" /><stop offset="0.5" stop-color="#dbd3ab" /><stop offset="0.75" stop-color="#bfb893" /><stop offset="1" stop-color="#6b6650" /></linearGradient>
                  <linearGradient id="neck"><stop offset="0" stop-color="#50555c" /><stop offset="0.4" stop-color="#81889a" /><stop offset="1" stop-color="#4c525a" /></linearGradient>
                  <radialGradient id="shine"><stop offset="0" stop-color="#fff" /><stop offset="0.4" stop-color="#f8fbff" stop-opacity="0.85" /><stop offset="1" stop-color="#e0e8f6" stop-opacity="0" /></radialGradient>
                  <radialGradient id="shadow"><stop offset="0" stop-color="#70767f" /><stop offset="1" stop-color="#8a929e" stop-opacity="0" /></radialGradient>
                  <linearGradient id="bend"><stop offset="0" stop-color="#a4adbb" /><stop offset="0.3" stop-color="#ccd5e6" /><stop offset="0.75" stop-color="#bdc6d6" /><stop offset="1" stop-color="#858c98" /></linearGradient>
                  <clipPath id="bodyClip"><path d="M219 1028L275 1190Q300 1262 430 1262L820 1040 754 860Z" /></clipPath>
               </defs>
               <ellipse cx="735" cy="1385" rx="11" ry="16" fill="#a8b0c0" stroke="#555b64" stroke-width="2.500" />
               <path d="M548 1392L582 1482Q600 1505 640 1504Q725 1495 744 1437L710 1335Z" fill="url(#brass)" stroke="#7c7659" stroke-width="2.500" />
               <ellipse cx="577" cy="1470" rx="13" ry="15" fill="#c2cad8" stroke="#555b64" stroke-width="2.500" />
               <ellipse cx="565" cy="1474" rx="9" ry="13" fill="#8c94a2" stroke="#40454c" stroke-width="2.500" transform="rotate(-28 565 1474)" />
               <path d="M427 1268L453 1352C470 1390 530 1400 585 1393C680 1378 770 1325 769 1273L738 1170Z" fill="url(#brass)" stroke="#7c7659" stroke-width="2.500" />
               <path d="M400 1255L430 1272Q455 1292 520 1291C620 1286 735 1225 741 1155Z" fill="url(#neck)" stroke="#484d55" stroke-width="3" />
               <path d="M219 1025L271 1180C285 1240 340 1265 430 1264C610 1260 828 1140 820 1040L752 850Z" fill="url(#steel)" stroke="#484d55" stroke-width="2.500" />
               <path d="M278 1205C300 1245 350 1256 430 1256C600 1252 800 1150 818 1062" fill="none" stroke="#50565e" stroke-width="2.500" />
               <g clip-path="url(#bodyClip)" fill="#8a0408" stroke="#8a0408" stroke-width="1" font-family="Liberation Sans" font-weight="bold">
                  <text font-size="25" transform="translate(388 1172) rotate(190)">FLUORESCENT</text>
                  <text font-size="25" transform="translate(308 1128) rotate(205)">BULB</text>
               </g>
               <path d="M176 885C176 930 195 950 219 1028C250 1060 310 1070 370 1069C560 1064 760 950 755 856L721 735Z" fill="url(#pink)" stroke="#756a6d" stroke-width="2.500" />
               <path d="M176 885C172 805 290 725 440 684C540 660 585 665 625 667C690 672 722 700 721 738C714 830 500 968 320 967C240 966 178 932 176 885Z" fill="#e7d4d6" stroke="#857a7d" stroke-width="2.500" />
               <ellipse cx="476" cy="742" rx="32" ry="17" fill="#c3ccd6" stroke="#484d55" stroke-width="2.500" />
               <ellipse cx="383" cy="766" rx="20" ry="14" fill="#c3ccd6" stroke="#484d55" stroke-width="2.500" />
               <ellipse cx={feet[0][0]} cy={feet[0][1]} rx="60" ry="27" fill="#c3ccd6" stroke="#484d55" stroke-width="2.500" transform="rotate(-14 608 764)" />
               {#each backTubes as t, i}{@render tube(t, "back" + i)}{/each}
               <path d="M283 180C264 155 262 68 335 67C400 67 450 130 465 182C450 205 410 212 383 208C375 190 360 170 345 163C335 178 310 180 283 180Z" fill="url(#bend)" stroke="#40454c" stroke-width="2.500" />
               <ellipse cx="322" cy="156" rx="34" ry="18" fill="url(#shadow)" />
               <ellipse cx="395" cy="145" rx="62" ry="26" fill="url(#shine)" transform="rotate(50 395 145)" />
               {#each frontTubes as t, i}
                  <ellipse cx={feet[i + 1][0]} cy={feet[i + 1][1]} rx="59" ry="27" fill="#c3ccd6" stroke="#484d55" stroke-width="2.500" transform="rotate(-14 {feet[i + 1][0]} {feet[i + 1][1]})" />
                  {@render tube(t, "front" + i)}
               {/each}
               <path d="M63 314C44 240 55 142 128 137C168 137 195 165 207 225L200 206Q180 230 150 236Q142 250 146 296Q110 320 63 314Z" fill="url(#bend)" stroke="#40454c" stroke-width="2.500" />
               <ellipse cx="162" cy="205" rx="16" ry="32" fill="url(#shadow)" transform="rotate(25 162 205)" />
               <ellipse cx="95" cy="240" rx="26" ry="70" fill="url(#shine)" />
               <path d="M172 352C152 270 215 199 295 197C360 197 400 235 409 268C395 290 360 300 333 300C325 285 305 283 290 285C265 290 250 310 253 327C235 350 205 355 172 352Z" fill="url(#bend)" stroke="#40454c" stroke-width="2.500" />
               <ellipse cx="250" cy="245" rx="75" ry="28" fill="url(#shine)" transform="rotate(-28 250 245)" />
            </svg>

            <svg class="view-cube" width="90" height="87" viewBox="130 90 270 261" role="img" aria-label="View cube">
               <g stroke="#b0b0b0" stroke-width="3" stroke-linejoin="round">
                  <path d="M145 162L265 99 342 130 211 200Z" fill="#fdfdfd" />
                  <path d="M145 162L211 200 257 333 190 280Z" fill="#f6f6f6" />
                  <path d="M211 200L342 130 378 260 257 333Z" fill="#ededed" />
               </g>
               <g font-family="Open Sans" fill="#444">
                  <text font-size="19" transform="translate(200 138) rotate(22)">BOTTOM</text>
                  <text font-size="17" transform="translate(175 232) rotate(38)">FRONT</text>
                  <text font-size="29" transform="translate(332 206) rotate(152)">LEFT</text>
               </g>
               <path d="M262 210L308 184" stroke="#60e060" stroke-width="3" /><path d="M300 180l18 0-10 12z" fill="#60e060" />
               <path d="M262 210L234 195" stroke="#f07070" stroke-width="3" /><path d="M228 190l9 1-4 8z" fill="#f06060" />
               <path d="M262 210L277 260" stroke="#8080f0" stroke-width="3" /><path d="M272 258l10-2-3 14z" fill="#7070f0" />
               <circle cx="261" cy="209" r="7" fill="#e8c818" stroke="#907808" stroke-width="2" />
            </svg>

            <div class="message">
               <span class="bar"></span>
               <div class="node">No top level part selected.</div>
            </div>
         </div>

         <div class="prompt">
            <svg width="20" height="9" viewBox="0 0 20 9" aria-hidden="true"><rect x=".5" y=".5" width="19" height="8" fill="#cfe0f4" stroke="#2a4f8a" /><rect x="1" y="1" width="18" height="2" fill="#4a7cc0" /><path d="M3 6h4M9 6h4M15 6h2" stroke="#5a88c0" stroke-width="2" /></svg>
            <label for="prompt-text">PromptBar</label>
            <input id="prompt-text" type="text" bind:value={prompt} />
            <div class="prompt-ctl">
               <button class="bigger" aria-label="Increase text">A<svg width="4" height="12" viewBox="0 0 4 12"><path d="M0 2.500 2 0l2 2.500z" fill="#111" /></svg></button>
               <button class="smaller" aria-label="Decrease text">A<svg width="4" height="14" viewBox="0 0 4 14"><path d="M0 0h4L2 2.500z" fill="#111" /></svg></button>
               <button aria-label="Collapse"><svg width="9" height="10" viewBox="0 0 9 10"><path d="M1 4.500 4.500 1 8 4.500M1 9 4.500 5.500 8 9" fill="none" stroke="#111" stroke-width="1.300" /></svg></button>
               <button aria-label="Options"><svg width="10" height="10" viewBox="0 0 10 10"><path d="M0 1h10" stroke="#111" stroke-width="2" /><path d="M0 4h10L5 9z" fill="#111" /></svg></button>
               <button aria-label="Pin"><svg width="9" height="11" viewBox="0 0 9 11"><path d="M3 6V.5h3V6M1 6.500h7M4.500 7v4" fill="none" stroke="#111" stroke-width="1.300" /></svg></button>
               <button aria-label="Close"><svg width="9" height="9" viewBox="0 0 9 9"><path d="M.5.5l8 8M8.500.5l-8 8" stroke="#222" stroke-width="1.500" /></svg></button>
            </div>
         </div>
      </main>

      <aside class="right">
         {#each ["sQ", "sTube", "sFb", "sCard", "sReq"] as name}
            <button aria-label={name}>{@render icon(name, 20)}</button>
         {/each}
         <span class="vtext">Requirements</span>
      </aside>
   </div>

   <footer>
      <span class="count">0 items are selected</span>
      <input type="search" placeholder="Find a command" aria-label="Find a command" />
      {#each statusIcons as name}
         <button aria-label={name}>{@render icon(name)}</button>
      {/each}
      <input class="zoom-range" type="range" min="0" max="100" value="32" aria-label="Zoom" />
      {#each ["plus", "stop", "up"] as name}
         <button aria-label={name}>{@render icon(name)}</button>
      {/each}
   </footer>

   <div class="taskbar">
      <span class="search"></span>
      <span class="running"></span>
      <span class="clock">10:24 PM</span>
      <span class="peek"></span>
   </div>
</div>

<style>
   :global(body) {
      background: #fff;
   }

   .defs {
      position: absolute;
   }

   .app {
      display: flex;
      flex-direction: column;
      height: 100vh;
      overflow: hidden;
      color: #444;
      font-family: "Noto Sans", "Open Sans", sans-serif;
      font-size: 11px;
   }

   svg {
      display: block;
      flex-shrink: 0;
   }

   button {
      display: flex;
      align-items: center;
      justify-content: center;
      margin: 0;
      padding: 0;
      border: 0;
      background: none;
      color: inherit;
      font: inherit;
   }

   input, select {
      box-sizing: border-box;
      margin: 0;
      font: inherit;
   }

   .caret {
      color: #777;
   }

   /* title and tabs */

   header {
      display: flex;
      height: 50px;
      flex-shrink: 0;
   }

   .logo {
      width: 38px;
      height: 38px;
      margin: 3px 0 0 3px;
      border: 1px solid #2a579a;
      border-radius: 4px;
   }

   .head-main {
      display: flex;
      flex: 1;
      flex-direction: column;
   }

   .title-row {
      display: grid;
      grid-template-columns: 1fr auto 1fr;
      height: 26px;
   }

   .qat {
      display: flex;
      align-items: center;
      height: 24px;
      padding-left: 9px;
   }

   .qat-line {
      width: 1px;
      height: 24px;
      margin: 0 6px 0 5px;
      background: #ccc;
   }

   .drop {
      width: 16px;
   }

   .drop .caret {
      width: 5px;
      color: #aaa;
   }

   .custom {
      width: 28px;
   }

   .title {
      padding-right: 40px;
      font-size: 12px;
      line-height: 26px;
   }

   .win-ctl {
      display: flex;
      align-items: center;
      justify-content: flex-end;
      gap: 17px;
      padding: 4px 8px 0 0;
   }

   .tab-row {
      display: flex;
      height: 24px;
   }

   .tab-row::before {
      width: 30px;
      margin-left: -41px;
      padding-left: 41px;
      border-bottom: 1px solid #ccc;
      content: "";
   }

   nav {
      display: flex;
   }

   .tab {
      padding: 0 13px;
      border: 1px solid transparent;
      border-bottom-color: #ccc;
   }

   .tab.active {
      border-color: #ccc #ccc #fff;
      color: #2a579a;
   }

   .siemens {
      flex: 1;
      padding-right: 50px;
      border-bottom: 1px solid #ccc;
      color: #099;
      font-family: "Open Sans", sans-serif;
      font-size: 20px;
      font-weight: 800;
      line-height: 23px;
      text-align: right;
   }

   .doc-ctl {
      display: flex;
      align-items: center;
      gap: 7px;
      padding-right: 4px;
      border-bottom: 1px solid #ccc;
   }

   .help {
      width: 14px;
      height: 16px;
      background: #999;
      color: #fff;
      font-size: 13px;
      font-weight: bold;
   }

   /* ribbon */

   .ribbon {
      display: flex;
      height: 82px;
      flex-shrink: 0;
      padding-top: 4px;
      border-bottom: 1px solid #ccc;
   }

   .group {
      position: relative;
      padding: 0 4px 0 6px;
   }

   .group:first-child {
      padding-left: 8px;
   }

   .group::after {
      position: absolute;
      top: 2px;
      right: 0;
      width: 1px;
      height: 73px;
      background: #d8d8d8;
      content: "";
   }

   .parts {
      display: flex;
      height: 63px;
   }

   .group-name {
      color: #777;
      line-height: 12px;
      text-align: center;
      white-space: nowrap;
   }

   .big {
      flex-direction: column;
      justify-content: flex-start;
      height: 63px;
      padding-top: 2px;
   }

   .big.sm { width: 42px; }
   .big.md { width: 50px; }
   .big.lg { width: 64px; }
   .big.xl { width: 74px; }

   .big.on {
      background: #c2d5f2;
   }

   .big.off {
      color: #b0b0b0;
   }

   .lines {
      margin-top: 5px;
      line-height: 11px;
      white-space: nowrap;
   }

   .lines > span {
      display: flex;
      justify-content: center;
   }

   .lines .caret {
      width: 5px;
      margin: 3px 0 0 2px;
   }

   .lines .below {
      padding-top: 3px;
   }

   .off .caret {
      color: #bbb;
   }

   .col {
      display: flex;
      flex-direction: column;
   }

   .col button {
      width: 21px;
      height: 21px;
   }

   .arrow-col {
      display: flex;
      flex-direction: column;
      justify-content: center;
      width: 12px;
   }

   .arrow-col.last {
      justify-content: flex-end;
   }

   .arrow-col button {
      height: 21px;
   }

   .arrow-col .caret {
      width: 5px;
   }

   .sep {
      width: 1px;
      margin: 0 3px;
      background: #d8d8d8;
   }

   .config {
      display: flex;
      flex-direction: column;
      gap: 7px;
      width: 153px;
      padding-top: 7px;
   }

   .config-row {
      display: flex;
      align-items: center;
   }

   .config-row button {
      width: 21px;
      height: 21px;
   }

   .combo {
      position: relative;
      display: block;
      width: 130px;
   }

   .combo select {
      display: block;
      width: 100%;
      height: 21px;
      padding: 0 3px;
      border: 1px solid #999;
      border-radius: 0;
      background: #fff;
      color: #111;
      appearance: none;
   }

   .config .combo select {
      font-size: 12px;
   }

   .combo .caret {
      position: absolute;
      top: 9px;
      right: 5px;
      width: 5px;
      pointer-events: none;
   }

   .combo.off select {
      border-color: #d8d8d8;
      color: #999;
      opacity: 1;
   }

   .cubes {
      display: grid;
      grid-template-columns: repeat(3, 32px);
      grid-template-rows: 31px 32px;
   }

   .cubes .sel {
      border: 3px solid #c2d5f2;
   }

   .styles {
      width: 140px;
      padding-bottom: 1px;
   }

   .styles .combo {
      width: 140px;
   }

   .styles button {
      gap: 3px;
      height: 21px;
      padding-left: 3px;
      color: #222;
   }

   .aa {
      font-family: "Liberation Serif", serif;
      font-weight: bold;
      line-height: 14px;
   }

   .aa small {
      font-size: 9px;
      vertical-align: 5px;
   }

   .aa i {
      border-bottom: 1px solid #1c1c80;
      color: #1c1c80;
      font-size: 14px;
   }

   /* work area */

   .work {
      display: flex;
      flex: 1;
      min-height: 0;
   }

   aside {
      display: flex;
      flex-direction: column;
      align-items: flex-start;
      width: 29px;
      background: #f4f4f4;
   }

   aside button {
      width: 24px;
      height: 34px;
   }

   .right button, .right .vtext {
      width: 34px;
   }

   .vtext {
      width: 24px;
      margin-top: -4px;
      color: #3355a5;
      font-size: 12px;
      line-height: 24px;
      writing-mode: vertical-rl;
   }

   .left .vtext {
      height: 132px;
   }

   .right .vtext {
      line-height: 34px;
   }

   main {
      display: flex;
      flex: 1;
      flex-direction: column;
      min-width: 0;
   }

   .doc-tabs {
      display: flex;
      align-items: flex-end;
      justify-content: space-between;
      height: 30px;
      padding-left: 2px;
      border-bottom: 1px solid #2a579a;
   }

   .doc-tab {
      display: flex;
      align-items: center;
      gap: 4px;
      height: 28px;
      padding-left: 17px;
      background: #2a579a;
      color: #fff;
   }

   .doc-tab button {
      width: 18px;
      height: 28px;
      margin-left: 12px;
   }

   .doc-nav {
      display: flex;
      align-items: center;
      gap: 8px;
      height: 34px;
      padding-right: 3px;
   }

   .viewport {
      position: relative;
      flex: 1;
      overflow: hidden;
      background: #fafcfc;
   }

   .grip {
      display: flex;
      align-items: center;
      justify-content: center;
      box-sizing: border-box;
      width: 250px;
      height: 9px;
      border: 1px solid #8c8c8c;
      background: linear-gradient(#eee, #c4c4c4);
   }

   .grip span {
      width: 39px;
      border-top: 2px dotted #3a5a9a;
   }

   .tree {
      padding: 2px 0 0 4px;
      color: #111;
   }

   .row {
      display: flex;
      height: 16px;
      padding-left: 7px;
   }

   .row label {
      display: flex;
      align-items: center;
      gap: 3px;
   }

   .exp {
      display: flex;
      align-items: center;
      width: 15px;
   }

   .node {
      display: flex;
      align-items: center;
      box-sizing: border-box;
      gap: 4px;
      width: max-content;
      height: 14px;
      padding: 0 3px 0 1px;
      border: 1px solid #a4b8be;
      background: linear-gradient(#fff, #e2ecef);
      line-height: 12px;
   }

   .tight {
      gap: 3px;
   }

   .root {
      margin-bottom: 1px;
   }

   .dim {
      color: #848484;
   }

   .row input {
      display: grid;
      place-content: center;
      width: 13px;
      height: 13px;
      border: 1px solid #4a5c80;
      background: #fff;
      appearance: none;
   }

   .row input:checked::before {
      width: 3px;
      height: 7px;
      margin-bottom: 2px;
      border: solid #15386a;
      border-width: 0 2px 2px 0;
      content: "";
      transform: rotate(40deg);
   }

   .lamp {
      position: absolute;
      top: 182px;
      left: 701px;
   }

   .view-cube {
      position: absolute;
      right: 18px;
      bottom: 17px;
   }

   .message {
      position: absolute;
      bottom: 100px;
      left: 3px;
      color: #111;
   }

   .message .bar {
      display: block;
      width: 21px;
      height: 4px;
      margin-bottom: 1px;
      background: #ffa64d;
   }

   .message .node {
      padding: 0 3px 0 15px;
   }

   .prompt {
      display: flex;
      align-items: center;
      height: 25px;
      padding-left: 5px;
      border-top: 1px solid #ccc;
      background: #fff;
      color: #111;
   }

   .prompt label {
      width: 66px;
      padding-left: 5px;
   }

   .prompt input {
      flex: 1;
      height: 22px;
      padding: 0 1px;
      border: solid #999;
      border-width: 1px 0 0 1px;
      color: #111;
      font-size: 12px;
   }

   .prompt-ctl {
      display: flex;
      width: 102px;
   }

   .prompt-ctl button {
      box-sizing: border-box;
      width: 16px;
      height: 20px;
   }

   .prompt-ctl .bigger, .prompt-ctl .smaller {
      font-family: "Liberation Serif", serif;
      font-size: 17px;
      font-weight: bold;
   }

   .prompt-ctl .bigger {
      width: 26px;
      padding-left: 4px;
   }

   .prompt-ctl .smaller {
      padding-top: 3px;
      font-size: 12px;
   }

   /* status bar and taskbar */

   footer {
      display: flex;
      align-items: center;
      justify-content: flex-end;
      height: 20px;
      flex-shrink: 0;
      padding-right: 1px;
      background: #2a579a;
      color: #fff;
   }

   .count {
      margin-right: 107px;
   }

   footer input[type="search"] {
      align-self: flex-end;
      width: 140px;
      height: 18px;
      padding: 0 3px;
      border: 0;
      background: #fff;
   }

   footer input::placeholder {
      color: #b4b4b4;
   }

   footer button {
      width: 22px;
      height: 20px;
   }

   .zoom-range {
      width: 113px;
      height: 20px;
      background: none;
      appearance: none;
   }

   .zoom-range::-webkit-slider-runnable-track {
      height: 1px;
      background: #fff;
   }

   .zoom-range::-webkit-slider-thumb {
      width: 11px;
      height: 14px;
      margin-top: -8px;
      border: 1px solid #dce8f6;
      border-radius: 2px 2px 5px 5px;
      background: #6a90c4;
      appearance: none;
   }

   .taskbar {
      display: flex;
      height: 8px;
      flex-shrink: 0;
      overflow: hidden;
      padding-left: 48px;
      background: #020308;
      color: #fff;
   }

   .search {
      box-sizing: border-box;
      width: 344px;
      border-top: 1px solid #aaa;
      background: #f0f0f0;
   }

   .running {
      width: 48px;
      margin-left: 277px;
      background: #333;
   }

   .clock {
      margin-left: auto;
      padding-right: 55px;
      line-height: 18px;
   }

   .peek {
      width: 4px;
      border-left: 1px solid #666;
   }
</style>
